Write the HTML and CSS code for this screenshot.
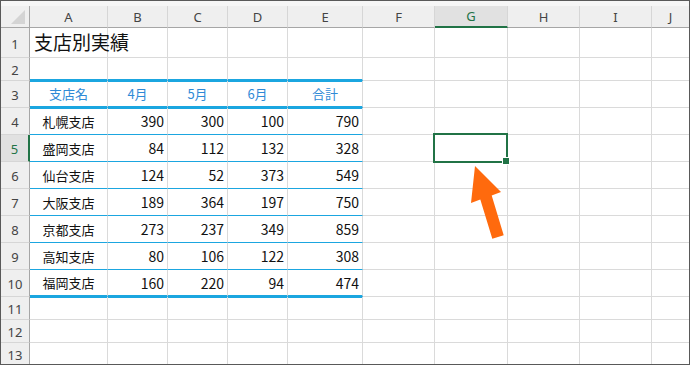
FILE: index.html
```html
<!DOCTYPE html>
<html lang="ja">
<head>
    <meta charset="UTF-8">
    <meta name="viewport" content="width=device-width, initial-scale=1.0">
    <title>支店別実績 - Sheet</title>
    <link rel="stylesheet" href="styles.css">
</head>
<body>
    <div class="sheet">
        <div class="top-strip"></div>

        <!-- column headers -->
        <div class="row head">
            <div class="corner"><span class="tri"></span></div>
            <div class="ch">A</div>
            <div class="ch">B</div>
            <div class="ch">C</div>
            <div class="ch">D</div>
            <div class="ch">E</div>
            <div class="ch">F</div>
            <div class="ch sel">G</div>
            <div class="ch">H</div>
            <div class="ch">I</div>
            <div class="ch last">J</div>
        </div>

        <div class="row r-title">
            <div class="rh">1</div>
            <div class="c title">支店別実績</div>
            <div class="c"></div><div class="c"></div><div class="c"></div><div class="c"></div>
            <div class="c"></div><div class="c"></div><div class="c"></div><div class="c"></div><div class="c last"></div>
        </div>

        <div class="row r-short">
            <div class="rh">2</div>
            <div class="c t above"></div><div class="c t above"></div><div class="c t above"></div><div class="c t above"></div><div class="c t above"></div>
            <div class="c"></div><div class="c"></div><div class="c"></div><div class="c"></div><div class="c last"></div>
        </div>

        <div class="row">
            <div class="rh">3</div>
            <div class="c t hd">支店名</div>
            <div class="c t hd">4月</div>
            <div class="c t hd">5月</div>
            <div class="c t hd">6月</div>
            <div class="c t hd">合計</div>
            <div class="c"></div><div class="c"></div><div class="c"></div><div class="c"></div><div class="c last"></div>
        </div>

        <div class="row">
            <div class="rh">4</div>
            <div class="c t d first name">札幌支店</div>
            <div class="c t d first num">390</div>
            <div class="c t d first num">300</div>
            <div class="c t d first num">100</div>
            <div class="c t d first num">790</div>
            <div class="c"></div><div class="c"></div><div class="c"></div><div class="c"></div><div class="c last"></div>
        </div>

        <div class="row">
            <div class="rh sel">5</div>
            <div class="c t d name">盛岡支店</div>
            <div class="c t d num">84</div>
            <div class="c t d num">112</div>
            <div class="c t d num">132</div>
            <div class="c t d num">328</div>
            <div class="c"></div><div class="c"></div><div class="c"></div><div class="c"></div><div class="c last"></div>
        </div>

        <div class="row">
            <div class="rh">6</div>
            <div class="c t d name">仙台支店</div>
            <div class="c t d num">124</div>
            <div class="c t d num">52</div>
            <div class="c t d num">373</div>
            <div class="c t d num">549</div>
            <div class="c"></div><div class="c"></div><div class="c"></div><div class="c"></div><div class="c last"></div>
        </div>

        <div class="row">
            <div class="rh">7</div>
            <div class="c t d name">大阪支店</div>
            <div class="c t d num">189</div>
            <div class="c t d num">364</div>
            <div class="c t d num">197</div>
            <div class="c t d num">750</div>
            <div class="c"></div><div class="c"></div><div class="c"></div><div class="c"></div><div class="c last"></div>
        </div>

        <div class="row">
            <div class="rh">8</div>
            <div class="c t d name">京都支店</div>
            <div class="c t d num">273</div>
            <div class="c t d num">237</div>
            <div class="c t d num">349</div>
            <div class="c t d num">859</div>
            <div class="c"></div><div class="c"></div><div class="c"></div><div class="c"></div><div class="c last"></div>
        </div>

        <div class="row">
            <div class="rh">9</div>
            <div class="c t d name">高知支店</div>
            <div class="c t d num">80</div>
            <div class="c t d num">106</div>
            <div class="c t d num">122</div>
            <div class="c t d num">308</div>
            <div class="c"></div><div class="c"></div><div class="c"></div><div class="c"></div><div class="c last"></div>
        </div>

        <div class="row">
            <div class="rh">10</div>
            <div class="c t end name">福岡支店</div>
            <div class="c t end num">160</div>
            <div class="c t end num">220</div>
            <div class="c t end num">94</div>
            <div class="c t end num">474</div>
            <div class="c"></div><div class="c"></div><div class="c"></div><div class="c"></div><div class="c last"></div>
        </div>

        <div class="row r-short">
            <div class="rh">11</div>
            <div class="c t below"></div><div class="c t below"></div><div class="c t below"></div><div class="c t below"></div><div class="c t below"></div>
            <div class="c"></div><div class="c"></div><div class="c"></div><div class="c"></div><div class="c last"></div>
        </div>

        <div class="row r-short">
            <div class="rh">12</div>
            <div class="c"></div><div class="c"></div><div class="c"></div><div class="c"></div><div class="c"></div>
            <div class="c"></div><div class="c"></div><div class="c"></div><div class="c"></div><div class="c last"></div>
        </div>

        <div class="row r-bottom">
            <div class="rh">13</div>
            <div class="c"></div><div class="c"></div><div class="c"></div><div class="c"></div><div class="c"></div>
            <div class="c"></div><div class="c"></div><div class="c"></div><div class="c"></div><div class="c last"></div>
        </div>

        <!-- active cell G5 -->
        <div class="active-cell"></div>
        <div class="fill-handle"></div>

        <svg class="pointer" width="690" height="365" viewBox="0 0 690 365">
            <polygon points="475,166 501,192 491.7,195.6 503.7,235.2 492.3,238.8 480.3,199.4 471,203" fill="#ff6a0d"/>
        </svg>
    </div>
</body>
</html>
```

FILE: styles.css
```css
* {
    box-sizing: border-box;
}

body {
    margin: 0;
    background: #fff;
    font-family: "Noto Sans CJK JP", "Noto Sans", sans-serif;
}

.sheet {
    position: relative;
    width: 690px;
    height: 365px;
    border: 1px solid #595959;
    overflow: hidden;
    background: #fff;
}

.top-strip {
    height: 5px;
    background: #f6f6f6;
}

.row {
    display: grid;
    grid-template-columns: 29px 78px 60px 60px 60px 75px 72px 73px 72px 72px 1fr;
    height: 27px;
}

.row.head {
    height: 22px;
}

.row.r-title {
    height: 30px;
}

.row.r-short {
    height: 23px;
}

.row.r-bottom {
    height: 21px;
}

/* headers */
.corner {
    display: flex;
    justify-content: flex-end;
    align-items: flex-end;
    padding: 0 4px 3px 0;
    background: #efefef;
    border-right: 1px solid #a6a6a6;
    border-bottom: 1px solid #a6a6a6;
}

.tri {
    width: 14px;
    height: 14px;
    background: #d4d4d4;
    clip-path: polygon(100% 0, 100% 100%, 0 100%);
}

.ch {
    display: flex;
    align-items: center;
    justify-content: center;
    background: #efefef;
    border-right: 1px solid #d6d6d6;
    border-bottom: 1px solid #a6a6a6;
    color: #444;
    font-family: "Noto Sans", sans-serif;
    font-size: 13px;
}

.ch.sel {
    background: #e1e1e1;
    color: #217346;
    border-bottom: 2px solid #217346;
}

.ch.last {
    border-right: none;
}

.rh {
    display: flex;
    align-items: center;
    justify-content: center;
    padding-top: 2px;
    background: #efefef;
    border-right: 1px solid #a6a6a6;
    border-bottom: 1px solid #d6d6d6;
    color: #444;
    font-family: "Noto Sans", sans-serif;
    font-size: 13px;
}

.rh.sel {
    background: #e1e1e1;
    color: #217346;
    border-right: 2px solid #217346;
}

.r-bottom .rh,
.r-bottom .c {
    border-bottom: none;
}

/* cells */
.c {
    display: flex;
    align-items: center;
    border-right: 1px solid #dadada;
    border-bottom: 1px solid #dadada;
    color: #111;
    font-size: 13px;
    white-space: nowrap;
}

.c.last {
    border-right: none;
}

.title {
    padding: 0 0 2px 4px;
    font-size: 19px;
    overflow: visible;
}

/* table borders */
.t.above {
    border-bottom: 2px solid #1ba6e0;
}

.t.hd {
    justify-content: center;
    color: #2f8ad6;
    box-shadow: inset 0 1px 0 #1ba6e0;
    border-bottom: 2px solid #1ba6e0;
}

.t.d {
    border-bottom: 1px solid #1ba6e0;
}

.t.first {
    box-shadow: inset 0 1px 0 #1ba6e0;
}

.t.end {
    border-bottom: 2px solid #1ba6e0;
}

.t.below {
    box-shadow: inset 0 1px 0 #1ba6e0;
}

.name {
    justify-content: center;
}

.num {
    justify-content: flex-end;
    padding-right: 3px;
    font-size: 14px;
}

/* selection */
.active-cell {
    position: absolute;
    left: 432px;
    top: 132px;
    width: 75px;
    height: 30px;
    border: 2px solid #217346;
}

.fill-handle {
    position: absolute;
    left: 502px;
    top: 157px;
    width: 6px;
    height: 6px;
    background: #217346;
    box-shadow: 0 0 0 1px #fff;
}

.pointer {
    position: absolute;
    left: -1px;
    top: -1px;
    pointer-events: none;
}
```
